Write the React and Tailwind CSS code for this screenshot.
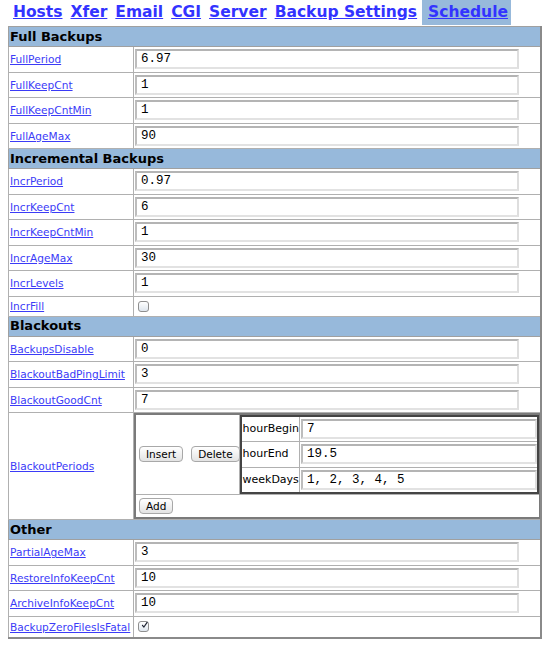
import React from 'react';

const sections = [
  {
    title: 'Full Backups',
    rows: [
      { name: 'FullPeriod', value: '6.97' },
      { name: 'FullKeepCnt', value: '1' },
      { name: 'FullKeepCntMin', value: '1' },
      { name: 'FullAgeMax', value: '90' },
    ],
  },
  {
    title: 'Incremental Backups',
    rows: [
      { name: 'IncrPeriod', value: '0.97' },
      { name: 'IncrKeepCnt', value: '6' },
      { name: 'IncrKeepCntMin', value: '1' },
      { name: 'IncrAgeMax', value: '30' },
      { name: 'IncrLevels', value: '1' },
      { name: 'IncrFill', check: false },
    ],
  },
  {
    title: 'Blackouts',
    rows: [
      { name: 'BackupsDisable', value: '0' },
      { name: 'BlackoutBadPingLimit', value: '3' },
      { name: 'BlackoutGoodCnt', value: '7' },
      { name: 'BlackoutPeriods', periods: true },
    ],
  },
  {
    title: 'Other',
    rows: [
      { name: 'PartialAgeMax', value: '3' },
      { name: 'RestoreInfoKeepCnt', value: '10' },
      { name: 'ArchiveInfoKeepCnt', value: '10' },
      { name: 'BackupZeroFilesIsFatal', check: true },
    ],
  },
];

const navLinks = ['Hosts', 'Xfer', 'Email', 'CGI', 'Server', 'Backup Settings', 'Schedule'];

const TextBox = ({ value, width = 'w-[384px]' }) => (
  <input
    readOnly
    value={value}
    className={`${width} h-[20px] block bg-white border-2 border-t-[#b4b4b4] border-l-[#bdbdbd] border-r-[#dedede] border-b-[#e2e2e2] px-[4px] text-[12.5px] leading-[16px] text-black outline-none [font-family:'Liberation_Mono',monospace]`}
  />
);

const Check = ({ checked }) => (
  <span className="ml-[3px] w-[11px] h-[11px] rounded-[3px] border border-[#8f8f8f] bg-gradient-to-b from-white to-[#dfe6ee] flex items-center justify-center">
    {checked && (
      <svg width="12" height="12" viewBox="0 0 12 12" className="-mt-[3px] ml-[2px]">
        <path d="M2.5 6.5 L5 9.5 L10.5 1.5" fill="none" stroke="#1c2230" strokeWidth="2" strokeLinecap="round" strokeLinejoin="round" />
      </svg>
    )}
  </span>
);

const Btn = ({ children }) => (
  <button className="h-[16px] px-[6px] rounded-[4px] border border-[#a8a8a8] bg-gradient-to-b from-white to-[#e3e3e3] text-[10.5px] leading-[14px] text-black">
    {children}
  </button>
);

const Periods = () => (
  <table className="table-fixed border-collapse w-[407px] border-2 border-double border-[#7a7a7a] text-[11px] leading-[14px]">
    <colgroup>
      <col className="w-[104px]" />
      <col />
    </colgroup>
    <tbody>
      <tr>
        <td className="border border-[#b0b0b0] align-middle">
          <div className="flex gap-[8px] pl-[3px]">
            <Btn>Insert</Btn>
            <Btn>Delete</Btn>
          </div>
        </td>
        <td className="border border-[#b0b0b0] p-0">
          <table className="table-fixed border-collapse w-full border-2 border-double border-[#444]">
            <colgroup>
              <col className="w-[59px]" />
              <col />
            </colgroup>
            <tbody>
              {[
                ['hourBegin', '7'],
                ['hourEnd', '19.5'],
                ['weekDays', '1, 2, 3, 4, 5'],
              ].map(([k, v]) => (
                <tr key={k}>
                  <td className="border border-[#b0b0b0] h-[25.5px] text-black pl-[1px] whitespace-nowrap overflow-hidden">{k}</td>
                  <td className="border border-[#b0b0b0] h-[25.5px] pl-[1px]">
                    <TextBox value={v} width="w-[236px]" />
                  </td>
                </tr>
              ))}
            </tbody>
          </table>
        </td>
      </tr>
      <tr>
        <td colSpan={2} className="border border-[#b0b0b0] h-[24px] pl-[3px]">
          <Btn>Add</Btn>
        </td>
      </tr>
    </tbody>
  </table>
);

const rowHeight = (r) => {
  if (r.periods) return 'h-[107px]';
  if (r.check === true) return 'h-[22px]';
  if (r.check === false) return 'h-[20px]';
  return 'h-[25.5px]';
};

export default function App() {
  return (
    <div className="bg-white min-h-[647px] [font-family:'DejaVu_Sans',sans-serif]">
      <div className="h-[26px] flex items-start pl-[9px] leading-[22px]">
        {navLinks.map((l) => (
          <a
            key={l}
            href="#"
            className={`h-[25px] pt-[1px] text-[15.5px] font-bold underline text-[#3333ff] ${
              l === 'Schedule' ? 'bg-[#97b9db] pl-[6px] pr-[3px] ml-[1px]' : 'px-[4px]'
            }`}
          >
            {l}
          </a>
        ))}
      </div>
      <table className="table-fixed ml-[8px] w-[534px] border-collapse border-t border-l border-r-2 border-b-2 border-[#8a8a8a] text-[10.6px] leading-[14px]">
        <colgroup>
          <col className="w-[125px]" />
          <col />
        </colgroup>
        <tbody>
          {sections.map((s) => (
            <React.Fragment key={s.title}>
              <tr className="bg-[#97b9db]">
                <td colSpan={2} className="border border-[#a0a0a0] h-[20px] pl-[1px] text-[13px] font-bold text-black leading-[18px]">
                  {s.title}
                </td>
              </tr>
              {s.rows.map((r) => (
                <tr key={r.name}>
                  <td className={`border border-[#b0b0b0] ${rowHeight(r)} pl-[1px] align-middle whitespace-nowrap`}>
                    <a href="#" className="underline text-[#3b3bf7]">
                      {r.name}
                    </a>
                  </td>
                  <td className={`border border-[#b0b0b0] ${rowHeight(r)} ${r.periods ? 'p-0' : 'pl-[1px]'} align-middle`}>
                    {r.periods ? <Periods /> : r.check !== undefined ? <Check checked={r.check} /> : <TextBox value={r.value} />}
                  </td>
                </tr>
              ))}
            </React.Fragment>
          ))}
        </tbody>
      </table>
    </div>
  );
}
